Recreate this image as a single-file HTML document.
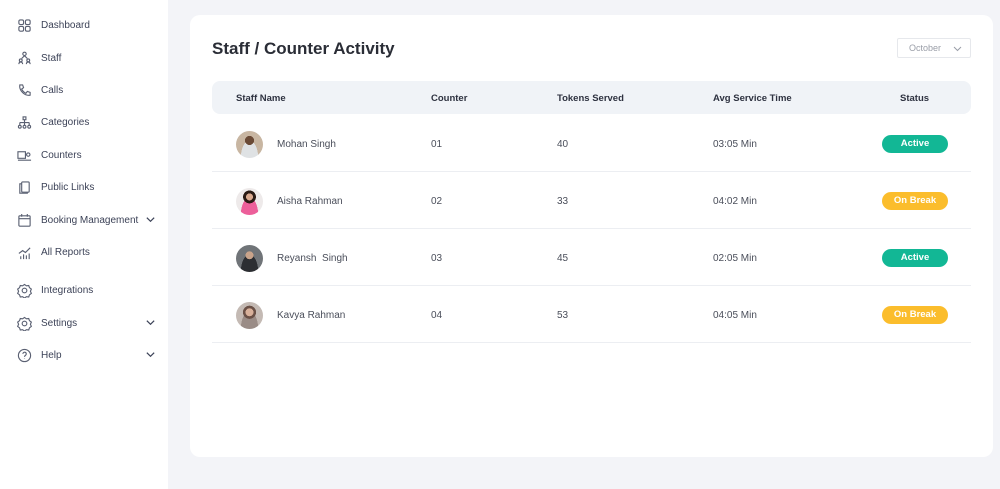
<!DOCTYPE html>
<html><head><style>
*{margin:0;padding:0;box-sizing:border-box}
body{width:1000px;height:489px;background:#f3f4f8;font-family:"Liberation Sans",sans-serif;position:relative;overflow:hidden}
.side{position:absolute;left:0;top:0;width:168px;height:489px;background:#fff}
.it{position:absolute;left:17px;height:16px;display:flex;align-items:center;font-size:10px;color:#3c4257;margin-top:1px}
.it svg{width:15px;height:15px;margin-right:9px;stroke:#5a6072;fill:none;stroke-width:1.2}
.chev{position:absolute;left:145px;width:11px;height:11px}
.card{position:absolute;left:190px;top:15px;width:803px;height:442px;background:#fff;border-radius:10px}
h1{position:absolute;left:22px;top:24px;font-size:17px;font-weight:bold;color:#2a2d36}
.dd{position:absolute;left:707px;top:23px;width:74px;height:20px;border:1px solid #e6e8ec;border-radius:2px;font-size:9px;color:#9a9ea8;padding:4px 0 0 11px}
.hd{position:absolute;left:22px;top:66px;width:759px;height:33px;background:#f0f3f7;border-radius:8px;font-size:9.5px;font-weight:bold;color:#2e3240}
.hd span,.row span{position:absolute;top:12px}
.row{position:absolute;left:22px;width:759px;height:57px;border-bottom:1px solid #eceef2;font-size:10px;color:#4a4e5a}
.row span{top:24px}
.av{position:absolute;left:24px;top:16px;width:27px;height:27px;border-radius:50%}
.b{position:absolute;left:670px;top:20px;width:66px;height:18px;border-radius:9px;color:#fff;font-weight:bold;font-size:9.5px;text-align:center;line-height:18px}
.g{background:#12b795}.y{background:#fbbd2c}
</style></head><body>
<div class="side">
<div class="it" style="top:16px"><svg viewBox="0 0 16 16"><rect x="2" y="2" width="5" height="5" rx="1.5"/><rect x="9" y="2" width="5" height="5" rx="1.5"/><rect x="2" y="9" width="5" height="5" rx="1.5"/><rect x="9" y="9" width="5" height="5" rx="1.5"/></svg>Dashboard</div>
<div class="it" style="top:49px"><svg viewBox="0 0 16 16"><circle cx="8" cy="3" r="1.8"/><path d="M5 8l3-3 3 3M2 14c0-3 4-3 4 0M10 14c0-3 4-3 4 0"/><circle cx="4" cy="10" r="1.5"/><circle cx="12" cy="10" r="1.5"/></svg>Staff</div>
<div class="it" style="top:81px"><svg viewBox="0 0 16 16"><path d="M3 2l3 0 1 3-2 1.5c1 2 2.5 3.5 4.5 4.5L11 9l3 1v3c-6 1-12-5-11-11z"/></svg>Calls</div>
<div class="it" style="top:113px"><svg viewBox="0 0 16 16"><rect x="6.5" y="2" width="3" height="3"/><path d="M8 5v3M3 8h10M3 8v3M8 8v3M13 8v3"/><circle cx="3" cy="12.5" r="1.5"/><circle cx="8" cy="12.5" r="1.5"/><circle cx="13" cy="12.5" r="1.5"/></svg>Categories</div>
<div class="it" style="top:146px"><svg viewBox="0 0 16 16"><rect x="1" y="4" width="8" height="7"/><circle cx="12" cy="7" r="1.8"/><path d="M9 13h6M1 13h8"/></svg>Counters</div>
<div class="it" style="top:178px"><svg viewBox="0 0 16 16"><rect x="5" y="2" width="8" height="11" rx="1"/><path d="M5 4H3v10h8v-1"/></svg>Public Links</div>
<div class="it" style="top:211px"><svg viewBox="0 0 16 16"><rect x="2" y="3" width="12" height="11" rx="1"/><path d="M2 6h12M5 1v3M11 1v3"/></svg>Booking Management</div>
<svg class="chev" style="top:214px" viewBox="0 0 12 12"><path d="M2 4l4 4 4-4" stroke="#3c4257" fill="none" stroke-width="1.3"/></svg>
<div class="it" style="top:243px"><svg viewBox="0 0 16 16"><path d="M2 9l4-3 3 2 5-5M4 15v-3M7 15v-5M10 15v-4M13 15v-6"/></svg>All Reports</div>
<div class="it" style="top:281px"><svg viewBox="0 0 16 16"><path d="M8 1.5l2 1.5 2.5-.3.8 2.3 2 1.5-1 2.3 1 2.3-2 1.5-.8 2.3-2.5-.3-2 1.5-2-1.5-2.5.3-.8-2.3-2-1.5 1-2.3-1-2.3 2-1.5.8-2.3 2.5.3z"/><circle cx="8" cy="8" r="2.5"/></svg>Integrations</div>
<div class="it" style="top:314px"><svg viewBox="0 0 16 16"><path d="M8 1.5l2 1.5 2.5-.3.8 2.3 2 1.5-1 2.3 1 2.3-2 1.5-.8 2.3-2.5-.3-2 1.5-2-1.5-2.5.3-.8-2.3-2-1.5 1-2.3-1-2.3 2-1.5.8-2.3 2.5.3z"/><circle cx="8" cy="8" r="2.5"/></svg>Settings</div>
<svg class="chev" style="top:317px" viewBox="0 0 12 12"><path d="M2 4l4 4 4-4" stroke="#3c4257" fill="none" stroke-width="1.3"/></svg>
<div class="it" style="top:346px"><svg viewBox="0 0 16 16"><circle cx="8" cy="8" r="6.5"/><path d="M6.3 6.3a1.8 1.8 0 113 1.3c-.8.5-1.3.8-1.3 1.8M8 11v.5"/></svg>Help</div>
<svg class="chev" style="top:349px" viewBox="0 0 12 12"><path d="M2 4l4 4 4-4" stroke="#3c4257" fill="none" stroke-width="1.3"/></svg>
</div>
<div class="card">
<h1>Staff / Counter Activity</h1>
<div class="dd">October<svg style="position:absolute;left:55px;top:7px" width="9" height="6" viewBox="0 0 9 6"><path d="M1 1l3.5 3.5L8 1" stroke="#9a9ea8" fill="none"/></svg></div>
<div class="hd"><span style="left:24px">Staff Name</span><span style="left:219px">Counter</span><span style="left:345px">Tokens Served</span><span style="left:501px">Avg Service Time</span><span style="left:688px">Status</span></div>
<div class="row" style="top:100px"><div class="av" style="background:radial-gradient(circle at 50% 35%,#6a4a36 0 20%,transparent 21%),radial-gradient(ellipse at 50% 100%,#dfe2e4 0 45%,transparent 46%),#c8b6a2"></div><span style="left:65px">Mohan Singh</span><span style="left:219px">01</span><span style="left:345px">40</span><span style="left:501px">03:05 Min</span><div class="b g">Active</div></div>
<div class="row" style="top:157px"><div class="av" style="background:radial-gradient(circle at 50% 33%,#d9a98f 0 15%,#2a1a14 16% 28%,transparent 29%),radial-gradient(ellipse at 50% 100%,#ec5f9a 0 45%,transparent 46%),#eeeaea"></div><span style="left:65px">Aisha Rahman</span><span style="left:219px">02</span><span style="left:345px">33</span><span style="left:501px">04:02 Min</span><div class="b y">On Break</div></div>
<div class="row" style="top:214px"><div class="av" style="background:radial-gradient(circle at 50% 38%,#c9a38a 0 18%,transparent 19%),radial-gradient(ellipse at 50% 100%,#2c2e32 0 45%,transparent 46%),#707478"></div><span style="left:65px">Reyansh &nbsp;Singh</span><span style="left:219px">03</span><span style="left:345px">45</span><span style="left:501px">02:05 Min</span><div class="b g">Active</div></div>
<div class="row" style="top:271px"><div class="av" style="background:radial-gradient(circle at 50% 38%,#d8b09a 0 18%,#6a5046 19% 30%,transparent 31%),radial-gradient(ellipse at 50% 100%,#9a8c86 0 45%,transparent 46%),#c4bab4"></div><span style="left:65px">Kavya Rahman</span><span style="left:219px">04</span><span style="left:345px">53</span><span style="left:501px">04:05 Min</span><div class="b y">On Break</div></div>
</div>
</body></html>
